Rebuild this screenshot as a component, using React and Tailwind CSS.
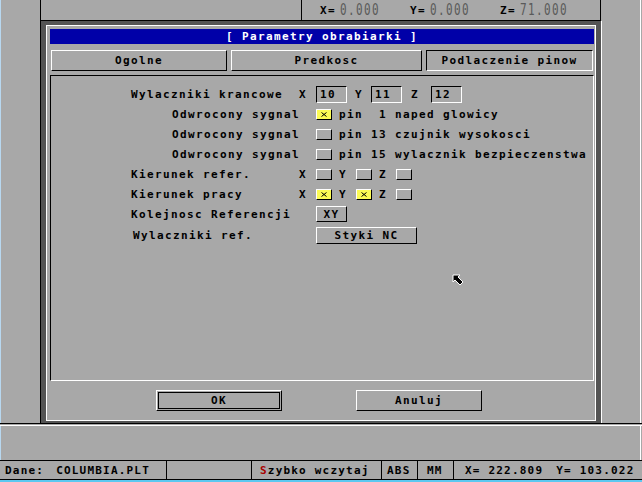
import React from "react";

const raised = "border border-t-white border-l-white border-b-black border-r-black";
const sunken = "border border-t-black border-l-black border-b-white border-r-white";

function ValBox({ children, className = "" }) {
  return (
    <div className={`w-[31px] h-[17px] ${sunken} flex items-center pl-[3px] ${className}`}>
      {children}
    </div>
  );
}

function Check({ on, className = "" }) {
  return (
    <div
      className={`w-[16px] h-[11px] ${raised} flex items-center justify-center ${on ? "bg-[#fcfc54]" : ""} ${className}`}
    >
      {on ? (
        <svg width="6" height="5" viewBox="0 0 6 5">
          <path d="M0.5 0.5 L5.5 4.5 M5.5 0.5 L0.5 4.5" stroke="black" strokeWidth="1" />
        </svg>
      ) : null}
    </div>
  );
}

function PinRow({ on, text }) {
  return (
    <div className="flex items-center h-[20px]">
      <div className="w-[248px] pl-[121px] whitespace-pre">Odwrocony sygnal</div>
      <div className="w-[17px]" />
      <Check on={on} />
      <div className="ml-[7px] whitespace-pre">{text}</div>
    </div>
  );
}

function AxisRow({ label, x, y, z }) {
  return (
    <div className="flex items-center h-[20px]">
      <div className="w-[248px] pl-[80px] whitespace-pre">{label}</div>
      <div className="w-[17px]">X</div>
      <Check on={x} />
      <div className="ml-[7px] w-[8px]">Y</div>
      <Check on={y} className="ml-[9px]" />
      <div className="ml-[7px] w-[8px]">Z</div>
      <Check on={z} className="ml-[9px]" />
    </div>
  );
}

export default function App() {
  return (
    <div className="relative w-[642px] h-[482px] bg-[#a8a8a8] flex flex-col overflow-hidden text-black font-['DejaVu_Sans_Mono',monospace] font-bold text-[11px] tracking-[1.38px] leading-none">
      {/* main area */}
      <div className="h-[424px] flex border-b border-b-black">
        <div className="w-[40px] border-l border-l-[#b8d8f0]" />
        <div className="w-[562px] flex flex-col">
          {/* top bar */}
          <div className="h-[21px] w-[561px] flex border-l border-r border-b border-black">
            <div className="w-[261px] border-r border-r-black" />
            <div className="flex-1 flex items-center pl-[18px]">
              <span>X=</span>
              <span className="ml-[4px] font-normal text-[#5a5a5a] scale-y-[1.4]">0.000</span>
              <span className="ml-[30px]">Y=</span>
              <span className="ml-[4px] font-normal text-[#5a5a5a] scale-y-[1.4]">0.000</span>
              <span className="ml-[30px]">Z=</span>
              <span className="ml-[4px] font-normal text-[#5a5a5a] scale-y-[1.4]">71.000</span>
            </div>
          </div>
          {/* dialog */}
          <div className="h-[402px] bg-[#545454] border-l border-l-black border-r border-r-white pl-[5px] pr-[5px] pt-[4px]">
            <div className="w-[550px] h-[396px] border border-white bg-[#a8a8a8] pl-[3px] pt-[3px]">
              <div className="w-[544px] h-[15px] bg-[#0000a8] text-white flex items-center justify-center whitespace-pre">
                [ Parametry obrabiarki ]
              </div>
              <div className="mt-[6px] h-[21px] flex">
                <div className={`ml-[1px] w-[176px] ${raised} flex items-center justify-center`}>Ogolne</div>
                <div className={`ml-[4px] w-[191px] ${raised} flex items-center justify-center`}>Predkosc</div>
                <div className={`ml-[4px] w-[167px] ${sunken} flex items-center justify-center`}>Podlaczenie pinow</div>
              </div>
              <div className={`mt-[4px] w-[544px] h-[306px] ${sunken} pt-[8px]`}>
                <div className="flex items-center h-[20px]">
                  <div className="w-[248px] pl-[80px] whitespace-pre">Wylaczniki krancowe</div>
                  <div className="w-[17px]">X</div>
                  <ValBox>10</ValBox>
                  <div className="ml-[8px] w-[8px]">Y</div>
                  <ValBox className="ml-[8px]">11</ValBox>
                  <div className="ml-[9px] w-[8px]">Z</div>
                  <ValBox className="ml-[12px]">12</ValBox>
                </div>
                <PinRow on text="pin  1 naped glowicy" />
                <PinRow text="pin 13 czujnik wysokosci" />
                <PinRow text="pin 15 wylacznik bezpieczenstwa" />
                <AxisRow label="Kierunek refer." />
                <AxisRow label="Kierunek pracy" x y />
                <div className="flex items-center h-[20px]">
                  <div className="w-[265px] pl-[80px] whitespace-pre">Kolejnosc Referencji</div>
                  <div className={`w-[31px] h-[16px] ${raised} flex items-center justify-center`}>XY</div>
                </div>
                <div className="flex items-center h-[20px] mt-[1px]">
                  <div className="w-[265px] pl-[82px] whitespace-pre">Wylaczniki ref.</div>
                  <div className={`w-[101px] h-[17px] ${raised} flex items-center justify-center whitespace-pre`}>Styki NC</div>
                </div>
              </div>
              <div className="mt-[9px] h-[21px] flex">
                <div className={`ml-[106px] w-[126px] ${raised} p-[1px]`}>
                  <div className="w-full h-full border border-black flex items-center justify-center">OK</div>
                </div>
                <div className={`ml-[74px] w-[126px] ${raised} flex items-center justify-center`}>Anuluj</div>
              </div>
            </div>
          </div>
        </div>
        <div className="w-[38px]" />
        <div className="w-[1px] bg-white" />
        <div className="w-[1px]" />
      </div>
      <div className="h-[1px]" />
      <div className="h-[35px] border-t border-t-white flex">
        <div className="w-[1px] bg-[#b8d8f0]" />
        <div className="flex-1" />
        <div className="w-[1px] bg-white" />
        <div className="w-[1px]" />
      </div>
      {/* status bar */}
      <div className="h-[20px] border-t border-b border-black flex tracking-[1.2px]">
        <div className="w-[167px] border-r border-r-black flex items-center pl-[5px] whitespace-pre">
          <span>Dane:</span>
          <span className="ml-[12px]">COLUMBIA.PLT</span>
        </div>
        <div className="w-[85px] border-r border-r-black" />
        <div className="w-[130px] border-r border-r-black flex items-center pl-[8px] whitespace-pre">
          <span className="text-[#a80000]">S</span>zybko wczytaj
        </div>
        <div className="w-[36px] border-r border-r-black flex items-center pl-[5px]">ABS</div>
        <div className="w-[36px] border-r border-r-black flex items-center pl-[9px]">MM</div>
        <div className="flex-1 flex items-center pl-[11px] whitespace-pre">
          <span>X= 222.809</span>
          <span className="ml-[13px]">Y= 103.022</span>
        </div>
      </div>
      <div className="h-[2px] bg-[#5cc8f0]" />
      {/* mouse cursor */}
      <svg className="absolute left-[452px] top-[274px]" width="13" height="13" viewBox="0 0 13 13">
        <path d="M1 1 L8 1 L6 3 L11 8 L8 11 L3 6 L1 8 Z" fill="black" stroke="white" strokeWidth="1" />
      </svg>
    </div>
  );
}
